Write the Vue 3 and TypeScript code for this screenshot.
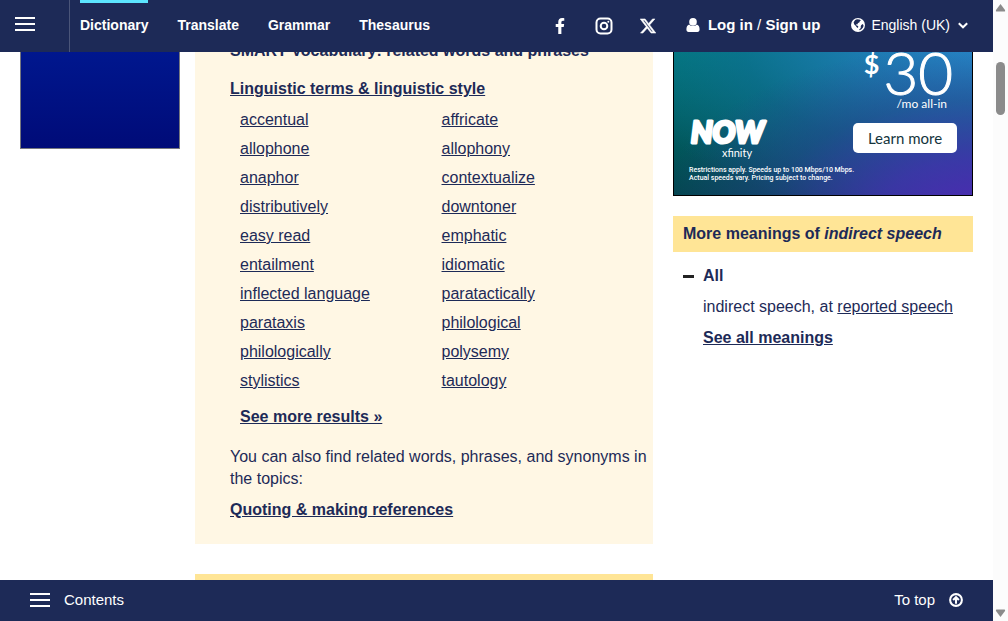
<script setup lang="ts">
interface NavItem {
  label: string
  active?: boolean
}

const nav: NavItem[] = [
  { label: 'Dictionary', active: true },
  { label: 'Translate' },
  { label: 'Grammar' },
  { label: 'Thesaurus' },
]

const words: string[] = [
  'accentual', 'affricate',
  'allophone', 'allophony',
  'anaphor', 'contextualize',
  'distributively', 'downtoner',
  'easy read', 'emphatic',
  'entailment', 'idiomatic',
  'inflected language', 'paratactically',
  'parataxis', 'philological',
  'philologically', 'polysemy',
  'stylistics', 'tautology',
]
</script>

<template>
  <div class="window">
    <div class="page">
      <header class="topbar">
        <button class="menu" type="button" aria-label="Open menu">
          <span class="bars"><i></i><i></i><i></i></span>
        </button>
        <nav class="nav" aria-label="Main">
          <a v-for="item in nav" :key="item.label" href="#" :class="{ active: item.active }">{{ item.label }}</a>
        </nav>
        <div class="social">
          <a href="#" aria-label="Facebook">
            <svg width="16" height="16" viewBox="-96 0 512 512"><path fill="currentColor" d="M279.14 288l14.22-92.66h-88.91v-60.13c0-25.35 12.42-50.06 52.24-50.06h40.42V6.26S260.43 0 225.36 0c-73.22 0-121.08 44.38-121.08 124.72v70.62H22.89V288h81.39v224h100.17V288z" /></svg>
          </a>
          <a href="#" aria-label="Instagram">
            <svg width="18" height="18" viewBox="0 0 18 18" fill="none" stroke="currentColor" stroke-width="2"><rect x="1.5" y="1.5" width="15" height="15" rx="4" /><circle cx="9" cy="9" r="3.3" /><circle cx="13.3" cy="4.7" r="1" fill="currentColor" stroke="none" /></svg>
          </a>
          <a href="#" aria-label="X">
            <svg width="16" height="16" viewBox="1 1.5 22 21"><path fill="currentColor" stroke="currentColor" stroke-width=".7" d="M18.244 2.25h3.308l-7.227 8.26 8.502 11.24H16.17l-5.214-6.817L4.99 21.75H1.68l7.73-8.835L1.254 2.25H8.08l4.713 6.231zm-1.161 17.52h1.833L7.084 4.126H5.117z" /></svg>
          </a>
        </div>
        <div class="account">
          <svg width="14" height="14" viewBox="0 0 14 14" fill="currentColor"><circle cx="7" cy="3.9" r="3.8" /><path d="M3.2 6.4C1.2 7 .4 9 .4 11.4.4 13 1.200 13.900 2.600 13.900H11.400C12.800 13.900 13.600 13 13.600 11.400 13.600 9 12.800 7 10.800 6.400 9.800 7.600 8.500 8 7 8S4.200 7.600 3.200 6.400Z" /></svg>
          <span><a href="#">Log in</a> / <a href="#">Sign up</a></span>
        </div>
        <button class="language" type="button">
          <svg width="14" height="14" viewBox="0 0 14 14"><circle cx="7" cy="7" r="7" fill="#fff" /><path fill="#1d2a57" d="M4.200 1.900 6 1.300 8.300 1.500 10 2.300 8.800 3.200 8.300 4.600 7 5.100 6.300 6.400 5 6.200 5.300 7.200 6.600 7.800 7.400 8.800 6.700 10 5.500 9 4.700 7.700 3.300 6.500 2.600 4.600 3.300 3.300ZM10.300 6.900 11.900 6.100 12.600 7.700 12 9.500 10.500 11.200 8.600 12.300 8.200 11.500 9.800 9.900 9.700 8.400Z" /></svg>
          <span>English (UK)</span>
          <svg width="10" height="7" viewBox="0 0 10 7" fill="none" stroke="currentColor" stroke-width="2"><path d="M.8 1.200 5 5.300 9.200 1.200" /></svg>
        </button>
      </header>

      <main class="content">
        <aside class="left"><div class="banner"></div></aside>

        <div class="center">
          <section class="card">
            <h2>SMART Vocabulary: related words and phrases</h2>
            <a class="strong topic" href="#">Linguistic terms &amp; linguistic style</a>
            <ul class="words">
              <li v-for="word in words" :key="word"><a href="#">{{ word }}</a></li>
            </ul>
            <a class="strong more" href="#">See more results »</a>
            <p>You can also find related words, phrases, and synonyms in the topics:</p>
            <a class="strong" href="#">Quoting &amp; making references</a>
          </section>
          <section class="next-card"></section>
        </div>

        <aside class="right">
          <div class="ad">
            <div class="offer">
              <div class="brand">
                <svg width="80" height="30" viewBox="0 0 80 30"><text class="now" x="2" y="27">NOW</text></svg>
                <span class="xfinity">xfinity</span>
              </div>
              <div class="deal">
                <div class="price"><span class="dollar">$</span><span class="amount">30</span></div>
                <div class="term">/mo all-in</div>
                <button type="button">Learn more</button>
              </div>
            </div>
            <div class="fine">Restrictions apply. Speeds up to 100 Mbps/10 Mbps.<br />Actual speeds vary. Pricing subject to change.</div>
          </div>
          <h2 class="meanings-title">More meanings of <em>indirect speech</em></h2>
          <div class="meanings">
            <h3><i class="minus"></i>All</h3>
            <p>indirect speech, at <a href="#">reported speech</a></p>
            <a class="strong" href="#">See all meanings</a>
          </div>
        </aside>
      </main>

      <footer class="bottombar">
        <button type="button">
          <span class="bars"><i></i><i></i><i></i></span>
          Contents
        </button>
        <a href="#">
          To top
          <svg width="14" height="14" viewBox="0 0 15 15" fill="none" stroke="currentColor"><circle cx="7.500" cy="7.500" r="6.300" stroke-width="2.200" /><path stroke-width="2.200" d="M7.500 11.500V5M4.400 7.600 7.500 4.500 10.600 7.600" /></svg>
        </a>
      </footer>
    </div>

    <div class="scrollbar" aria-hidden="true">
      <svg width="11" height="8" viewBox="0 0 11 8"><path fill="#8b8b8b" d="M5.500 0 10 6Q10.500 7.500 9.500 7.500H1.500Q.5 7.500 1 6Z" /></svg>
      <span class="track"><span class="thumb"></span></span>
      <svg width="11" height="8" viewBox="0 0 11 8"><path fill="#8b8b8b" d="M5.500 8 10 2Q10.500 .5 9.500 .5H1.500Q.5 .5 1 2Z" /></svg>
    </div>
  </div>
</template>

<style>
body {
  margin: 0;
  background: #fff;
}
</style>

<style scoped>
.window {
  display: flex;
  height: 100vh;
  overflow: hidden;
  color: #1d2a57;
  font: 16px/22px "Liberation Sans", Arial, sans-serif;
}
.window * {
  box-sizing: border-box;
}
.page {
  flex: 1;
  min-width: 0;
  display: flex;
  flex-direction: column;
}
h2, h3, p, ul {
  margin: 0;
  padding: 0;
  font-size: 16px;
}
a {
  color: inherit;
}
button {
  border: 0;
  padding: 0;
  background: none;
  color: inherit;
  font: inherit;
  cursor: pointer;
}
svg {
  display: block;
  flex: none;
}
.bars {
  display: flex;
  flex-direction: column;
  gap: 4px;
  width: 20px;
}
.bars i {
  height: 2px;
  background: #fff;
}

.topbar {
  display: flex;
  align-items: center;
  flex: none;
  height: 52px;
  padding-right: 25px;
  background: #1d2a57;
  color: #fff;
}
.topbar a {
  text-decoration: none;
}
.menu {
  align-self: stretch;
  display: flex;
  align-items: flex-start;
  width: 70px;
  padding: 17px 15px;
  border-right: 1px solid #4a5579;
}
.nav {
  align-self: stretch;
  display: flex;
  gap: 29px;
  margin-left: 10px;
  font-size: 14px;
  font-weight: bold;
}
.nav a {
  padding-top: 11px;
  border-top: 3px solid transparent;
}
.nav a.active {
  border-color: #5ce5ff;
}
.social {
  display: flex;
  align-items: center;
  gap: 27px;
  margin-left: auto;
}
.account {
  display: flex;
  align-items: center;
  gap: 8px;
  margin: 0 31px 2px 30px;
  font-size: 15px;
}
.account a {
  font-weight: bold;
}
.language {
  display: flex;
  align-items: center;
  gap: 6px;
  margin-bottom: 2px;
  font-size: 14px;
}
.language span {
  margin-right: 2px;
}

.content {
  flex: 1;
  min-height: 0;
  display: flex;
  padding: 0 20px;
  overflow: hidden;
}
.left {
  flex: none;
  width: 160px;
  margin-right: 15px;
}
.banner {
  height: 97px;
  border: 1px solid #75777f;
  border-top: 0;
  background: linear-gradient(#00178e, #000b78);
}
.center {
  flex: 1;
  min-width: 0;
}
.card {
  margin-top: -12px;
  padding: 0 5px 23px 35px;
  background: #fff7e4;
}
.card > a {
  display: block;
}
.strong {
  font-weight: bold;
}
.topic {
  margin-top: 16px;
}
.words {
  display: grid;
  grid-template-columns: 1fr 1fr;
  margin: 5px 15px 0 0;
  padding-left: 0;
  list-style: none;
  line-height: 29px;
}
.words li {
  padding-left: 10px;
}
.more {
  margin: 11px 0 0 10px;
}
.card p {
  margin: 18px 0 9px;
}
.next-card {
  height: 40px;
  margin-top: 30px;
  background: #ffe596;
}

.right {
  flex: none;
  width: 300px;
  margin-left: 20px;
}
.ad {
  display: flex;
  flex-direction: column;
  justify-content: flex-end;
  height: 144px;
  padding: 0 15px 13px;
  border: 1px solid #000;
  border-top: 0;
  color: #fff;
  background:
    radial-gradient(ellipse at 105% 115%, #5029b6 0%, rgba(66, 50, 174, 0.85) 25%, rgba(40, 65, 145, 0.5) 50%, rgba(20, 80, 120, 0) 75%),
    radial-gradient(ellipse at 105% -5%, #2789cb 0%, rgba(36, 125, 190, 0.85) 25%, rgba(20, 110, 160, 0.5) 55%, rgba(0, 110, 130, 0) 85%),
    linear-gradient(#007879, #02464c);
}
.offer {
  display: flex;
  align-items: flex-end;
  justify-content: space-between;
}
.brand {
  display: flex;
  flex-direction: column;
  align-items: center;
  margin-bottom: -6px;
}
.now {
  fill: #fff;
  stroke: #fff;
  stroke-width: 3px;
  stroke-linejoin: round;
  font: italic 900 30px Lato, sans-serif;
}
.xfinity {
  padding-left: 16px;
  font: 11px/13px Lato, sans-serif;
}
.deal {
  display: flex;
  flex-direction: column;
  align-items: flex-end;
}
.price {
  display: flex;
  align-items: flex-start;
  gap: 4px;
  margin-right: 4px;
  font-family: Lato, sans-serif;
}
.dollar {
  font-size: 27px;
  font-weight: bold;
  line-height: 34px;
}
.amount {
  font-size: 60px;
  font-weight: 300;
  line-height: 50px;
  -webkit-text-stroke: 1px #fff;
}
.term {
  margin: 0 10px 12px 0;
  font: 12px/14px Lato, sans-serif;
}
.deal button {
  width: 104px;
  height: 30px;
  border-radius: 5px;
  background: #fff;
  color: #14343c;
  font: 15px/28px Lato, sans-serif;
}
.fine {
  margin-top: 13px;
  font: 500 7px/8px Roboto, sans-serif;
  white-space: nowrap;
}
.meanings-title {
  margin-top: 20px;
  padding: 7px 10px;
  background: #ffe596;
}
.meanings {
  padding: 13px 0 0 30px;
}
.meanings h3 {
  display: flex;
  align-items: center;
  margin-left: -20px;
}
.minus {
  width: 11px;
  height: 3px;
  margin-right: 9px;
  background: #222;
}
.meanings p {
  margin: 9px 0;
}

.bottombar {
  display: flex;
  align-items: center;
  justify-content: space-between;
  flex: none;
  height: 41px;
  padding: 0 30px 2px;
  background: #1d2a57;
  color: #fff;
  font-size: 15px;
}
.bottombar button,
.bottombar a {
  display: flex;
  align-items: center;
  gap: 14px;
  text-decoration: none;
}

.scrollbar {
  flex: none;
  display: flex;
  flex-direction: column;
  align-items: center;
  width: 15px;
  padding: 4px 0;
  background: #fcfcfc;
}
.track {
  flex: 1;
  width: 9px;
  padding-top: 50px;
}
.thumb {
  display: block;
  height: 53px;
  border-radius: 5px;
  background: #8b8b8b;
}
</style>
